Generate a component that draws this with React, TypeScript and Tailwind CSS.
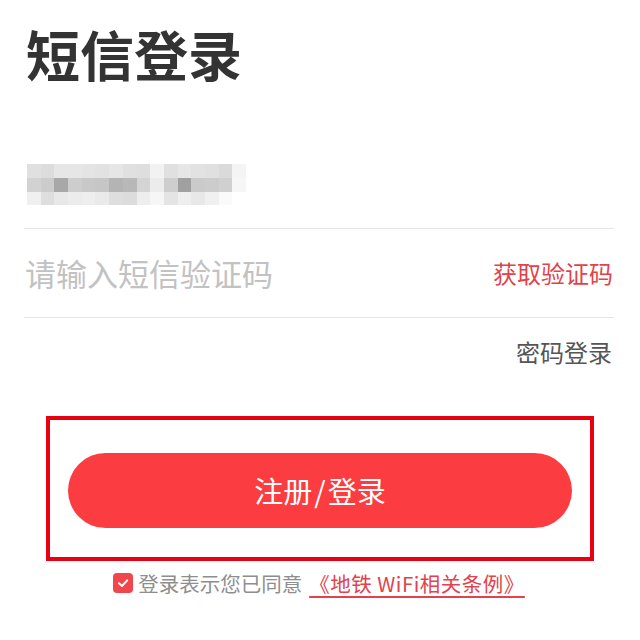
import React from "react";

const ROWS: string[][] = [
  ["bg-[#e0e0e0]","bg-[#dcdcdc]","bg-[#e6e6e6]","bg-[#e6e6e6]","bg-[#e4e4e4]","bg-[#e2e2e2]","bg-[#e6e6e6]","bg-[#e0e0e0]","bg-[#dedede]","bg-[#f2f2f2]","bg-[#e0e0e0]","bg-[#e6e6e6]","bg-[#e2e2e2]","bg-[#e0e0e0]","bg-[#dadada]","bg-[#f4f4f4]"],
  ["bg-[#d2d2d2]","bg-[#cccccc]","bg-[#a8a8a8]","bg-[#cdcdcd]","bg-[#c8c8c8]","bg-[#c6c6c6]","bg-[#b4b4b4]","bg-[#b8b8b8]","bg-[#d4d4d4]","bg-[#ececec]","bg-[#cecece]","bg-[#a0a0a0]","bg-[#cacaca]","bg-[#cccccc]","bg-[#d0d0d0]","bg-[#f6f6f6]"],
  ["bg-[#f0f0f0]","bg-[#dedede]","bg-[#e8e8e8]","bg-[#ececec]","bg-[#eeeeee]","bg-[#eaeaea]","bg-[#dedede]","bg-[#dcdcdc]","bg-[#eeeeee]","bg-[#f6f6f6]","bg-[#e4e4e4]","bg-[#eeeeee]","bg-[#e8e8e8]","bg-[#f0f0f0]","bg-[#fafafa]","bg-[#ffffff]"],
];

const ROW_H = ["h-[14px]", "h-[14px]", "h-[13px]"];

export default function App() {
  return (
    <div
      className="w-[640px] h-[640px] bg-white flex flex-col pl-[24px] pr-[26px] overflow-hidden"
      style={{ fontFamily: '"Noto Sans CJK SC", "Noto Sans", sans-serif' }}
    >
      <h1 className="mt-[27px] h-[54px] text-[54px] leading-[54px] font-bold text-[#333333] ml-[2px]">
        短信登录
      </h1>

      <div className="mt-[83px] ml-[3px] flex flex-col" aria-label="手机号">
        {ROWS.map((row, r) => (
          <div key={r} className={`grid grid-cols-[repeat(16,13.7px)] ${ROW_H[r]}`}>
            {row.map((c, i) => (
              <div key={i} className={c} />
            ))}
          </div>
        ))}
      </div>

      <div className="mt-[23px] h-px bg-[#e6e6e6]" />

      <div className="h-[88px] flex items-center justify-between">
        <span className="text-[31px] leading-[32px] text-[#c2c2c2] ml-[1px]">
          请输入短信验证码
        </span>
        <span className="text-[24px] leading-[24px] text-[#e2424b] mr-[1px]">
          获取验证码
        </span>
      </div>

      <div className="h-px bg-[#e6e6e6]" />

      <div className="mt-[22px] flex justify-end pr-[2px]">
        <span className="text-[24px] leading-[24px] text-[#555555]">密码登录</span>
      </div>

      <div className="mt-[52px] ml-[22px] w-[548px] h-[145px] border-[4px] border-[#e60012] pt-[33px] px-[18px]">
        <button className="w-full h-[75px] rounded-full bg-[#fb3c40] text-white text-[29px] leading-[29px] flex items-center justify-center">
          注册<span className="mx-[2px]">/</span>登录
        </button>
      </div>

      <div className="mt-[11px] flex items-center justify-center gap-[5px]">
        <div className="w-[20px] h-[20px] rounded-[4px] bg-[#f0464c] flex items-center justify-center">
          <svg width="14" height="14" viewBox="0 0 14 14" fill="none">
            <path d="M3 7.2 L6 10 L11.2 4.4" stroke="white" strokeWidth="2" strokeLinecap="round" strokeLinejoin="round" />
          </svg>
        </div>
        <span className="text-[20.5px] leading-[22px] text-[#8e8e8e]">
          登录表示您已同意
          <span className="ml-[7px] text-[#e2424b] underline decoration-[1.5px] underline-offset-[4px] tracking-[0.5px]">
            《地铁 WiFi相关条例》
          </span>
        </span>
      </div>
    </div>
  );
}
